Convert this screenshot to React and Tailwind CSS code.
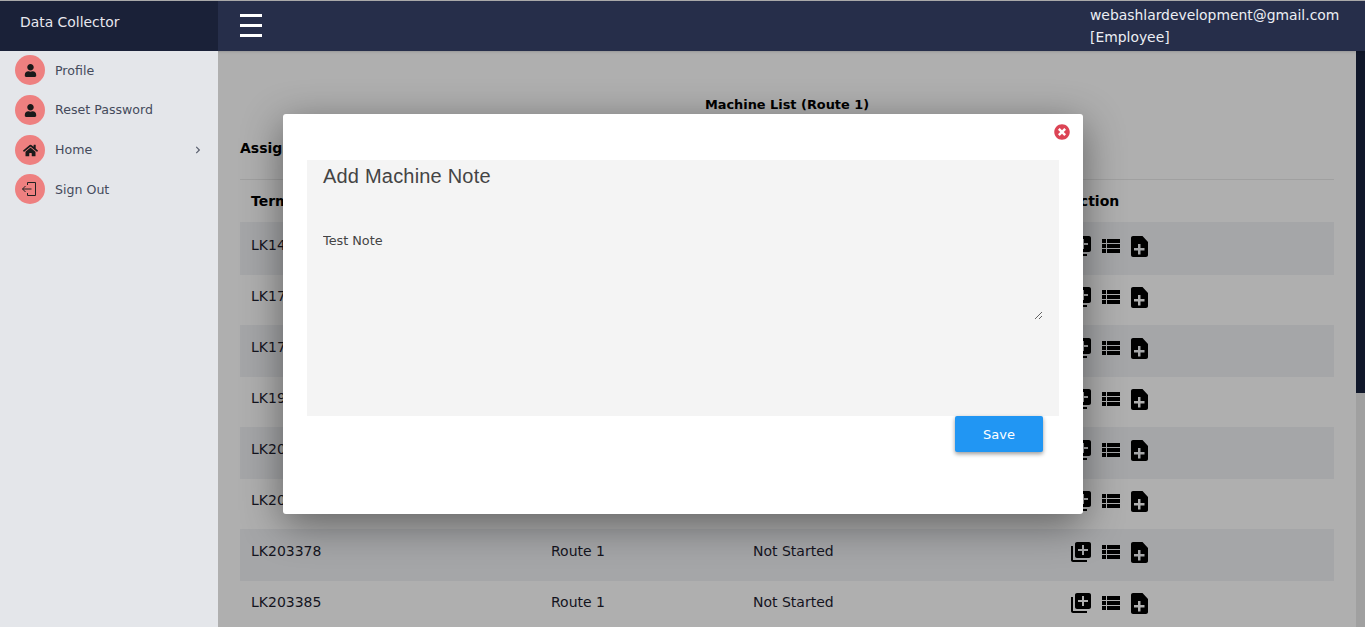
import React from 'react';
import { FaUser, FaHome, FaTimesCircle, FaChevronRight } from 'react-icons/fa';
import { MdLibraryAdd } from 'react-icons/md';

const menuItems = [
  { label: 'Profile', icon: <FaUser size={13} />, rowCls: 'mb-[10px]', textCls: 'pt-[2px]' },
  { label: 'Reset Password', icon: <FaUser size={13} />, rowCls: 'mb-[10px]', textCls: 'pt-[1px]' },
  { label: 'Home', icon: <FaHome size={15} />, rowCls: 'mb-[9px]', textCls: 'pt-[1px]', arrow: true },
  {
    label: 'Sign Out',
    rowCls: '',
    textCls: 'pt-[3px]',
    icon: (
      <svg width="18" height="18" viewBox="0 0 18 18" fill="none" stroke="#222" strokeWidth="1">
        <path d="M6.5 5V2.5h8v13h-8V13" />
        <path d="M10.5 9H1.5M4.5 6l-3 3 3 3" />
      </svg>
    ),
  },
];

const rows = [
  ['LK148201', 'h-[53px] pt-[13px] bg-[#a5a6a8]'],
  ['LK175520', 'h-[50px] pt-[11px]'],
  ['LK176034', 'h-[52px] pt-[12px] bg-[#a5a6a8]'],
  ['LK195517', 'h-[50px] pt-[11px]'],
  ['LK203360', 'h-[52px] pt-[12px] bg-[#a5a6a8]'],
  ['LK203371', 'h-[50px] pt-[11px]'],
  ['LK203378', 'h-[52px] pt-[12px] bg-[#a5a6a8]'],
  ['LK203385', 'h-[50px] pt-[11px]'],
];

// three tight bars with a small left column
const ListIcon = () => (
  <svg width="18" height="14" viewBox="0 0 18 14" fill="currentColor" className="ml-[9px]">
    <path d="M0 0h4v4H0zM5 0h13v4H5zM0 5h4v4H0zM5 5h13v4H5zM0 10h4v4H0zM5 10h13v4H5z" />
  </svg>
);

// file with cut corner and a plus knocked out
const FilePlusIcon = () => (
  <svg width="17" height="21" viewBox="0 0 17 21" fill="currentColor" className="ml-[11px]">
    <path
      fillRule="evenodd"
      d="M2 0h9.5L17 6v13c0 1.1-.9 2-2 2H2c-1.1 0-2-.9-2-2V2C0 .9.9 0 2 0zM7 8v4H3v2.5h4v4h2.5v-4h4V12h-4V8z"
    />
  </svg>
);

const Sidebar = () => (
  <aside className="w-[218px] shrink-0 bg-[#e4e6ea] pl-[15px] pt-[4px] relative z-20">
    {menuItems.map((item) => (
      <div key={item.label} className={`flex items-center h-[30px] text-[#454b5c] text-[12.6px] ${item.rowCls}`}>
        <span className="w-[30px] h-[30px] rounded-full bg-[#ee8080] flex items-center justify-center text-[#1a1a1a]">
          {item.icon}
        </span>
        <span className={`ml-[10px] ${item.textCls}`}>{item.label}</span>
        {item.arrow && <FaChevronRight size={8} className="ml-auto mr-[16px] text-[#5b6170]" />}
      </div>
    ))}
  </aside>
);

const Row = ({ id, cls }) => (
  <div className={`flex items-start text-[14px] text-[#14141e] ${cls}`}>
    <div className="w-[300px] pl-[11px]">{id}</div>
    <div className="w-[202px] pl-[11px]">Route 1</div>
    <div className="w-[319px] pl-[11px]">Not Started</div>
    <div className="flex items-center h-[24px] -mt-[1px] text-black pl-[8px]">
      <MdLibraryAdd size={24} />
      <ListIcon />
      <FilePlusIcon />
    </div>
  </div>
);

const App = () => (
  <div className="h-[627px] overflow-hidden flex flex-col font-['DejaVu_Sans',sans-serif] bg-[#afafaf]">
    <header className="h-[51px] shrink-0 flex border-t border-[#a9a9a9] relative z-20 bg-[#262e4a] shadow-sm">
      <div className="w-[218px] bg-[#1a2138] text-[#e8e8ee] text-[13.9px] pl-[20px] pt-[11px]">Data Collector</div>
      <div className="flex-1 flex justify-between">
        <div className="ml-[22px] mt-[13px] w-[22px] h-[23px] flex flex-col justify-between">
          <span className="h-[3px] bg-white" />
          <span className="h-[3px] bg-white" />
          <span className="h-[3px] bg-white" />
        </div>
        <div className="w-[275px] text-[13.9px] leading-[22px] text-[#eceef4] pt-[3px]">
          <div>webashlardevelopment@gmail.com</div>
          <div>[Employee]</div>
        </div>
      </div>
    </header>

    <div className="flex flex-1 min-h-0">
      <Sidebar />
      <main className="flex-1 px-[22px] overflow-hidden">
        <div className="text-center text-[12.9px] font-bold text-black mt-[45px] leading-[17px]">Machine List (Route 1)</div>
        <div className="text-[14px] font-bold text-black mt-[26px] leading-[18px]">Assigned Machines</div>
        <div className="border-t border-[#a0a0a0] mt-[22px] h-[43px] flex items-center text-[14px] font-bold text-black">
          <div className="w-[821px] pl-[11px]">Terminal ID</div>
          <div className="pl-[8px]">Action</div>
        </div>
        {rows.map(([id, cls]) => (
          <Row key={id} id={id} cls={cls} />
        ))}
      </main>
      {/* scrollbar */}
      <div className="w-[9px] shrink-0 bg-[#a0a0a0]">
        <div className="h-[342px] bg-[#10172a]" />
      </div>
    </div>

    {/* modal */}
    <div className="absolute left-[283px] top-[114px] w-[800px] h-[400px] bg-white rounded-[3px] shadow-[0_10px_40px_rgba(0,0,0,0.45)] z-10 px-[24px] pt-[46px]">
      <FaTimesCircle size={16} className="absolute right-[13px] top-[10px] text-[#dc4455]" />
      <div className="h-[256px] bg-[#f4f4f4] px-[16px]">
        <h2 className="font-['Liberation_Sans',sans-serif] text-[20px] tracking-[0.2px] leading-[32px] text-[#444]">Add Machine Note</h2>
        <textarea
          defaultValue="Test Note"
          className="block w-full h-[112px] mt-[16px] pt-[25px] text-[12.8px] leading-[16px] text-[#444] bg-transparent outline-none"
        />
      </div>
      <div className="flex justify-end pr-[16px]">
        <button className="w-[88px] h-[36px] pt-[1px] bg-[#2196f3] text-white text-[13px] rounded-[2px] shadow-[0_2px_4px_rgba(0,0,0,0.4)]">
          Save
        </button>
      </div>
    </div>
  </div>
);

export default App;
